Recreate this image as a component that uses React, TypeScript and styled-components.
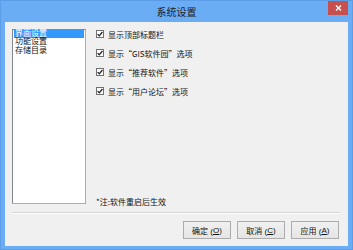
import React, { useState } from 'react'
import styled, { createGlobalStyle } from 'styled-components'

const GlobalStyle = createGlobalStyle`
  html, body {
    margin: 0;
    padding: 0;
    width: 353px;
    height: 250px;
    overflow: hidden;
    background: #ffffff;
  }
  * {
    box-sizing: border-box;
  }
`

const FONT = `"Liberation Sans", "Noto Sans CJK SC", sans-serif`
const CJK = `"Noto Sans CJK SC", "Liberation Sans", sans-serif`

const Frame = styled.div`
  width: 353px;
  height: 250px;
  background: #6aadf4;
  border: 1px solid #5b9de6;
  display: flex;
  flex-direction: column;
  padding: 0 4px 3px 4px;
  font-family: ${FONT};
`

const TitleBar = styled.div`
  height: 21px;
  position: relative;
  display: flex;
  align-items: center;
  justify-content: center;
  font-size: 10px;
  color: #222;
`

const CloseButton = styled.div`
  position: absolute;
  top: 0;
  right: 0;
  width: 20px;
  height: 14px;
  background: #c7504f;
  display: flex;
  align-items: center;
  justify-content: center;
`

const Client = styled.div`
  flex: 1;
  background: #f0f0f0;
  display: flex;
  flex-direction: column;
  padding: 7px 9px 0 7px;
`

const Main = styled.div`
  display: flex;
  height: 175px;
`

const ListBox = styled.div`
  width: 74px;
  height: 175px;
  background: #ffffff;
  border: 1px solid #abadb3;
  border-top-color: #828790;
  border-left-color: #828790;
  padding: 0 1px;
  display: flex;
  flex-direction: column;
`

const ListItem = styled.div<{ $selected?: boolean }>`
  height: 8.3px;
  line-height: 8.3px;
  font-size: 8px;
  padding-left: 1px;
  white-space: nowrap;
  color: ${p => (p.$selected ? '#ffffff' : '#111')};
  background: ${p => (p.$selected ? '#3399ff' : 'transparent')};
`

const Options = styled.div`
  flex: 1;
  display: flex;
  flex-direction: column;
  padding-left: 10px;
`

const OptionList = styled.div`
  display: flex;
  flex-direction: column;
  gap: 11px;
  padding-top: 1px;
`

const OptionRow = styled.label`
  display: flex;
  align-items: center;
  height: 8px;
  gap: 4px;
  font-family: ${CJK};
  font-size: 8px;
  color: #111;
  white-space: nowrap;
  cursor: default;
`

const Box = styled.span`
  width: 8px;
  height: 8px;
  background: #ffffff;
  border: 1px solid #707070;
  display: flex;
  align-items: center;
  justify-content: center;
`

const Note = styled.div`
  margin-top: auto;
  margin-bottom: -2px;
  font-family: ${CJK};
  font-size: 8px;
  color: #111;
  line-height: 8px;
`

const Separator = styled.div`
  margin-top: 8px;
  margin-right: -1px;
  height: 2px;
  border-top: 1px solid #d5d5d5;
  border-bottom: 1px solid #ffffff;
`

const ButtonBar = styled.div`
  margin-top: 7px;
  display: flex;
  justify-content: flex-end;
  gap: 6px;
`

const Button = styled.button`
  width: 48px;
  height: 18px;
  padding: 0;
  font-family: ${FONT};
  font-size: 8px;
  color: #111;
  border: 1px solid #acacac;
  background: linear-gradient(#f0f0f0, #e5e5e5);
  display: flex;
  align-items: center;
  justify-content: center;
  white-space: pre;
  u {
    text-decoration: underline;
  }
`

const CheckMark = () => (
  <svg width="6" height="6" viewBox="0 0 6 6">
    <path d="M0.6 3.1 L2.3 4.8 L5.4 1" fill="none" stroke="#222" strokeWidth="1.3" />
  </svg>
)

const CloseGlyph = () => (
  <svg width="7" height="6" viewBox="0 0 7 6">
    <path d="M1 0.5 L6 5.5 M6 0.5 L1 5.5" stroke="#fff" strokeWidth="1.4" />
  </svg>
)

const pages = ['界面设置', '功能设置', '存储目录']

const options = ['显示顶部标题栏', '显示“GIS软件园”选项', '显示“推荐软件”选项', '显示“用户论坛”选项']

const App = () => {
  const [page, setPage] = useState(0)
  const [checked, setChecked] = useState(options.map(() => true))

  return (
    <>
      <GlobalStyle />
      <Frame>
        <TitleBar>
          系统设置
          <CloseButton>
            <CloseGlyph />
          </CloseButton>
        </TitleBar>
        <Client>
          <Main>
            <ListBox>
              {pages.map((p, i) => (
                <ListItem key={p} $selected={i === page} onClick={() => setPage(i)}>
                  {p}
                </ListItem>
              ))}
            </ListBox>
            <Options>
              <OptionList>
                {options.map((o, i) => (
                  <OptionRow
                    key={o}
                    onClick={() => setChecked(prev => prev.map((c, j) => (j === i ? !c : c)))}
                  >
                    <Box>{checked[i] ? <CheckMark /> : null}</Box>
                    {o}
                  </OptionRow>
                ))}
              </OptionList>
              <Note>*注:软件重启后生效</Note>
            </Options>
          </Main>
          <Separator />
          <ButtonBar>
            <Button>
              确定 (<u>O</u>)
            </Button>
            <Button>
              取消 (<u>C</u>)
            </Button>
            <Button>
              应用 (<u>A</u>)
            </Button>
          </ButtonBar>
        </Client>
      </Frame>
    </>
  )
}

export default App
